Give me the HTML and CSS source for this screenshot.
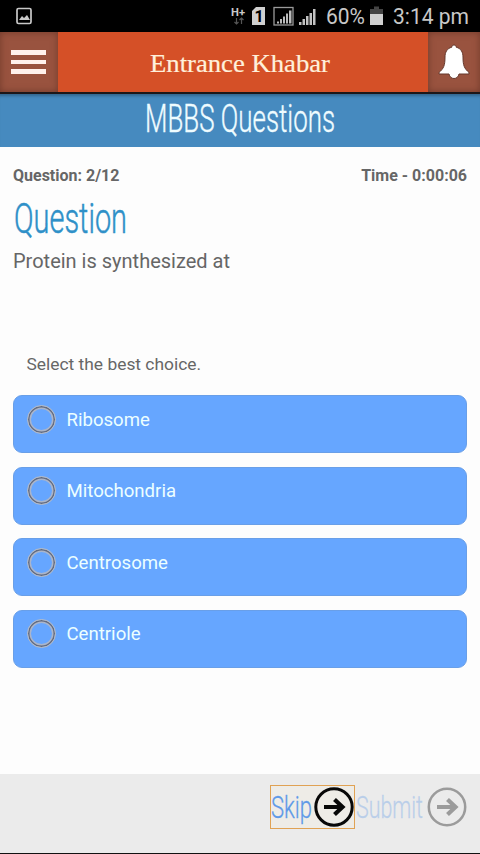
FILE: index.html
```
<!DOCTYPE html>
<html lang="en">
<head>
<meta charset="utf-8">
<title>Entrance Khabar</title>
<link rel="stylesheet" href="styles.css">
</head>
<body>
<div class="status">
  <svg class="status-art" width="480" height="32" viewBox="0 0 480 32">
    <rect x="17" y="8.500" width="14" height="15" rx="1.500" fill="none" stroke="#c9c9c9" stroke-width="1.700"/>
    <path d="M19 20l3-4 2 2 3-3 3 5z" fill="#c9c9c9"/>
    <text x="231" y="16" font-size="11" font-weight="700" textLength="14" lengthAdjust="spacingAndGlyphs">H+</text>
    <path d="M236.500 18v6m-2-2l2 2 2-2M241.500 24v-6m-2 2l2-2 2 2" fill="none" stroke="#555" stroke-width="1.200"/>
    <path d="M252 11l4-4h9v18h-13z" fill="#d0d0d0"/>
    <text class="sim" x="254.500" y="22" font-size="16" font-weight="700">1</text>
    <rect x="274" y="7.500" width="19" height="17.500" fill="none" stroke="#9a9a9a" stroke-width="1.300"/>
    <path d="M277 23.500v-2h2v2zM280 23.500v-4.500h2v4.500zM283 23.500v-7h2v7zM286 23.500v-10h2v10zM289 23.500V10.500h2.500v13z" fill="#bbb"/>
    <path d="M299 25v-3h2.500v3zM302.500 25v-6h2.500v6zM306 25v-9h2.500v9zM309.500 25v-12h2.500v12zM313 25V9h2.500v16z" fill="#c2c2c2"/>
    <text x="326" y="24" font-size="21.500" textLength="39" lengthAdjust="spacingAndGlyphs">60%</text>
    <path d="M370 9h4V6.500h5V9h4v5h-13z" fill="#444"/>
    <path d="M370 14h13v11h-13z" fill="#d0d0d0"/>
    <text x="393" y="24" font-size="22" textLength="76" lengthAdjust="spacingAndGlyphs">3:14 pm</text>
  </svg>
</div>
<header class="bar">
  <div class="bar-btn menu"><i></i><i></i><i></i></div>
  <h1 class="bar-title">
    <svg width="182" height="34" viewBox="0 0 182 34"><text x="0" y="25.500" font-size="25" textLength="180" lengthAdjust="spacingAndGlyphs">Entrance Khabar</text></svg>
  </h1>
  <div class="bar-btn bell">
    <svg width="34" height="38" viewBox="0 0 34 38">
      <path d="M17 2c1.300 0 2.200.9 2.200 2.200 4.800 1.200 6.800 5 6.800 9.800 0 8.500 1.300 11.500 6 15.500v1.500H22c-.6 2.800-2.400 4.500-5 4.500s-4.400-1.700-5-4.500H2v-1.500C6.700 25.500 8 22.500 8 14c0-4.800 2-8.600 6.800-9.800C14.800 2.900 15.700 2 17 2z"/>
    </svg>
  </div>
</header>
<div class="banner">
  <svg width="192" height="53" viewBox="0 0 192 53"><text x="1" y="38" font-size="39" textLength="190" lengthAdjust="spacingAndGlyphs">MBBS Questions</text></svg>
</div>
<main class="content">
  <div class="meta"><span>Question: 2/12</span><span>Time - 0:00:06</span></div>
  <h2 class="heading"><svg width="120" height="54" viewBox="0 0 120 54"><text x="1" y="36" font-size="42" textLength="113" lengthAdjust="spacingAndGlyphs">Question</text></svg></h2>
  <p class="question">Protein is synthesized at</p>
  <p class="hint">Select the best choice.</p>
  <ul class="choices">
    <li><span class="radio"></span>Ribosome</li>
    <li><span class="radio"></span>Mitochondria</li>
    <li><span class="radio"></span>Centrosome</li>
    <li><span class="radio"></span>Centriole</li>
  </ul>
</main>
<footer class="footer">
  <div class="action skip">
    <svg width="43" height="42" viewBox="0 0 43 42"><text x="0" y="32" font-size="31" textLength="41" lengthAdjust="spacingAndGlyphs">Skip</text></svg>
    <svg class="arrow" width="40" height="40" viewBox="0 0 40 40"><circle cx="20" cy="20" r="18.200"/><path d="M10 20h18M20.500 12.500l8 7.500-8 7.500"/></svg>
  </div>
  <div class="action submit">
    <svg width="72" height="42" viewBox="0 0 72 42"><text x="1" y="32" font-size="31" textLength="67" lengthAdjust="spacingAndGlyphs">Submit</text></svg>
    <svg class="arrow" width="40" height="40" viewBox="0 0 40 40"><circle cx="20" cy="20" r="18.200"/><path d="M10 20h18M20.500 12.500l8 7.500-8 7.500"/></svg>
  </div>
</footer>
</body>
</html>
```
FILE: styles.css
```
* { box-sizing: border-box; margin: 0; padding: 0; }
body {
  width: 480px; height: 854px; overflow: hidden;
  display: flex; flex-direction: column;
  background: #fdfdfd; color: #666;
  font-family: Roboto, "Liberation Sans", sans-serif;
}
svg { display: block; overflow: visible; }
.status { height: 32px; background: #000; flex: none; }
.status text { fill: #c8c8c8; }
.status .sim { fill: #000; }
.bar {
  height: 62px; flex: none; display: flex;
  background: #d55027; border-bottom: 2px solid #1d1719;
}
.bar-btn {
  width: 58px; background: #99533f;
  box-shadow: inset 0 0 7px #703a2b;
  display: flex; align-items: center; justify-content: center;
}
.bell { width: 52px; }
.bell svg { fill: #fff; stroke: #66382c; stroke-width: 1; }
.menu { flex-direction: column; gap: 5px; padding-right: 2px; }
.menu i { width: 35px; height: 4.5px; background: #fff1ec; }
.bar-title { flex: 1; display: flex; align-items: center; justify-content: center; padding-top: 2px; padding-right: 4px; }
.bar-title text { font-family: "Liberation Serif", serif; font-weight: 400; fill: #fff0dc; stroke: #fff0dc; stroke-width: .2; }
.banner {
  height: 53px; flex: none; background: #468abf;
  box-shadow: inset 0 4px 3px -2px #34678f;
  display: flex; justify-content: center;
}
.banner text { fill: #effcff; font-weight: 300; stroke: #effcff; stroke-width: .4; }
.content { flex: 1; padding: 19px 13px 0; }
.meta { display: flex; justify-content: space-between; font-size: 16px; line-height: 20px; font-weight: 700; }
.heading { height: 48px; margin-top: 11px; }
.heading text { fill: #2e90c8; font-weight: 300; stroke: #2e90c8; stroke-width: .5; }
.question { font-size: 20px; line-height: 26px; margin-top: 3px; }
.hint { font-size: 17.4px; line-height: 24px; margin: 78px 0 0 13.5px; }
.choices { list-style: none; margin-top: 19px; display: flex; flex-direction: column; gap: 13.5px; }
.choices li {
  height: 58px; padding: 8.5px 13px; border-radius: 9px;
  background: #66a6ff; border: 1px solid #699fe8;
  color: #ecffff; font-size: 18.6px; line-height: 30px;
  display: flex; align-items: flex-start; gap: 11px;
}
.radio {
  width: 29px; height: 29px; border-radius: 50%; flex: none;
  border: 1.5px solid #b9bdc5; box-shadow: inset 0 0 0 1.5px #646c80, inset 0 0 0 3px #aab5ca;
}
.choices .radio { margin-right: -.5px; }
.footer {
  height: 80px; flex: none; background: #ebebeb; border-bottom: 1px solid #111;
  display: flex; justify-content: flex-end; align-items: flex-start; padding: 11px 13px 0 0;
}
.action { display: flex; align-items: center; height: 44px; border: 1px solid transparent; }
.action text { font-weight: 300; fill: #5f9ae8; stroke: #5f9ae8; stroke-width: .3; }
.skip { border-color: #e0a254; background: #eeece7; }
.submit { opacity: .35; border-width: 1px 0; }
.arrow { fill: none; stroke: #080808; stroke-width: 3; }
.arrow path { stroke-width: 4.2; }
.submit .arrow circle { stroke-width: 2.5; }
```
